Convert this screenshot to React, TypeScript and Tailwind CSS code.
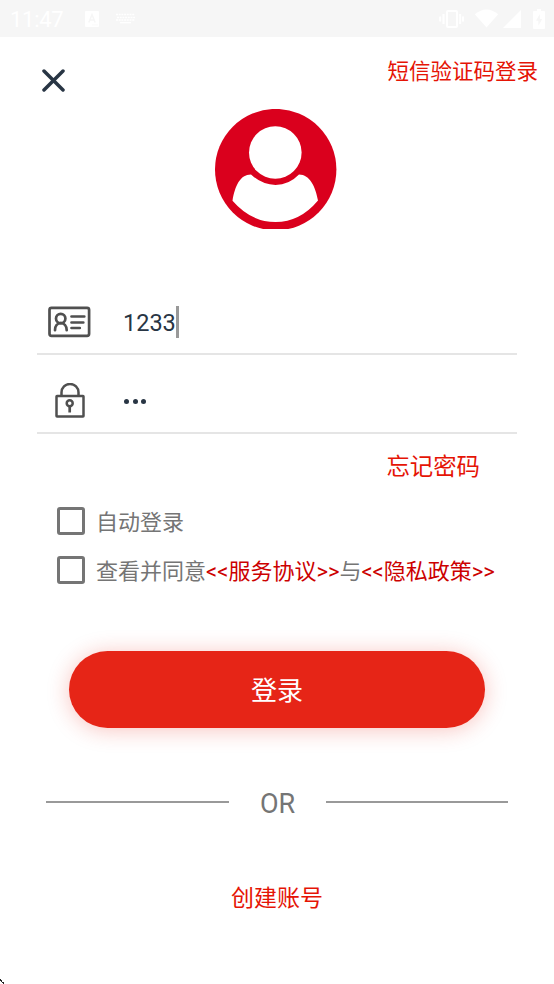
import React from "react";

function StatusBar() {
  return (
    <div className="flex h-[37px] items-center bg-[#f6f6f6] text-white">
      <span className="ml-[10px] mt-[2px] w-[74px] text-[22px] leading-none -tracking-[0.3px]">11:47</span>
      <svg className="ml-px" width="14" height="16" viewBox="0 0 14 16">
        <rect width="14" height="16" rx="1" fill="white" />
        <path d="M3.8 11.5 7 3.8l3.2 7.7M5 9h4" fill="none" stroke="#f6f6f6" strokeWidth="1.5" />
        <path d="M7 14h6" stroke="#f6f6f6" strokeWidth="0.6" />
      </svg>
      <svg className="ml-[17px]" width="19" height="11" viewBox="0 0 19 11" fill="none" stroke="white">
        <path d="M0 1.5h19M1 4.5h18M0 7h19" strokeWidth="1.6" strokeDasharray="2 0.7" />
        <path d="M4 9.7h11" strokeWidth="1.4" />
      </svg>
      <div className="ml-auto flex items-center">
        <svg width="25" height="20" viewBox="0 0 25 20" fill="none" stroke="white" strokeWidth="2">
          <rect x="8" y="2" width="10" height="16" rx="1" />
          <path d="M4.5 5v10M1.2 7.5v5M21.2 5v10M24 7.5v5" />
        </svg>
        <svg className="ml-[10px]" width="25" height="19" viewBox="0 0 25 19">
          <path d="M.8 5.2Q12.5-4.2 24.2 5.2L12.5 18.6Z" fill="white" />
        </svg>
        <svg className="ml-[4px]" width="18" height="18" viewBox="0 0 18 18">
          <path d="M0 18 18 0v18Z" fill="white" />
        </svg>
        <svg className="ml-[12px] mr-[9px]" width="12" height="20" viewBox="0 0 12 20">
          <path d="M4 0h4v2h3a1 1 0 0 1 1 1v16a1 1 0 0 1-1 1H1a1 1 0 0 1-1-1V3a1 1 0 0 1 1-1h3Z" fill="white" />
          <path d="M6.8 5 3 11.7h2.4v5.1L9.2 10H6.8Z" fill="#f6f6f6" />
        </svg>
      </div>
    </div>
  );
}

function Avatar() {
  return (
    <svg className="ml-[215px]" width="122" height="120" viewBox="0 0 122 120">
      <circle cx="60.7" cy="60.6" r="60.7" fill="#da001d" />
      <circle cx="60.3" cy="43.5" r="26.3" fill="white" />
      <path d="M17.5 91.700C20 77 25 65.500 36 65.500Q47 75.900 60.500 75.900T84 65.500C95 65.500 100.500 78 103 91.500Q85 113 60.500 113T17.500 91.700Z" fill="white" />
    </svg>
  );
}

function IdCardIcon() {
  return (
    <svg width="43" height="32" viewBox="0 0 43 32" fill="none" stroke="#505050" strokeWidth="2.700" strokeLinecap="round">
      <rect x="1.500" y="1.800" width="39.600" height="28" rx="2" />
      <circle cx="12.700" cy="12.500" r="4.700" />
      <path d="M7 24.200c0-4 2.200-7 5.700-7s6 3 6 7M23.500 10.500h12.800M23.500 16.500h11.800M23.500 22h8.300" />
    </svg>
  );
}

function LockIcon() {
  return (
    <svg width="30" height="35" viewBox="0 0 30 35" fill="none" stroke="#505050" strokeWidth="2.500">
      <rect x="1.500" y="13" width="27" height="20.500" rx="0.500" />
      <path d="M6.500 13V9.500a8.500 8.500 0 0 1 17 0V13" />
      <circle cx="14.700" cy="20.300" r="3" />
      <path d="M14.700 23.500v6" strokeWidth="2.700" />
    </svg>
  );
}

function Checkbox() {
  return <span className="box-border h-7 w-7 shrink-0 rounded-[3px] border-[3px] border-[#757575]" />;
}

export default function App() {
  return (
    <main className="relative flex h-[984px] w-[554px] flex-col overflow-hidden bg-white font-['Roboto','Noto_Sans_CJK_SC',sans-serif] text-[#757575]">
      <StatusBar />

      <header className="flex h-[72px] items-start justify-between pl-[42px] pr-[16px]">
        <svg className="mt-[32px]" width="23" height="23" viewBox="0 0 23 23" stroke="#283544" strokeWidth="3.500" strokeLinecap="round">
          <path d="M2 2l19 19M21 2 2 21" />
        </svg>
        <a className="mt-[19px] text-[21.500px] leading-8 text-[#e51405]">短信验证码登录</a>
      </header>

      <Avatar />

      <section className="mx-[37px] mt-[60px] text-[23.500px] text-[#283544]">
        <div className="flex h-[66px] items-center border-b-2 border-[#e5e5e5] pl-[11px] pt-[2px]">
          <IdCardIcon />
          <span className="ml-[32px] pt-px leading-8">1233</span>
          <span className="h-8 w-[3px] bg-[#999999]" />
        </div>
        <div className="flex h-[79px] items-center border-b-2 border-[#e5e5e5] pl-[18px] pt-[14px]">
          <LockIcon />
          <span className="ml-[39px] mt-[2px] flex gap-[3.500px]">
            <i className="h-[5px] w-[5px] rounded-full bg-[#283544]" />
            <i className="h-[5px] w-[5px] rounded-full bg-[#283544]" />
            <i className="h-[5px] w-[5px] rounded-full bg-[#283544]" />
          </span>
        </div>
      </section>

      <a className="mr-[74px] mt-[17px] self-end text-[23.400px] leading-8 text-[#e51405]">忘记密码</a>

      <section className="ml-[57px] mt-[24px] flex flex-col gap-[21px] whitespace-nowrap text-[22px] leading-7">
        <label className="flex h-7 items-center gap-[11px]">
          <Checkbox />
          <span className="pt-[3px]">自动登录</span>
        </label>
        <label className="flex h-7 items-center gap-[11px]">
          <Checkbox />
          <span className="pt-[4px]">
            查看并同意<span className="text-[#cc0000]">&lt;&lt;服务协议&gt;&gt;</span>与<span className="text-[#cc0000]">&lt;&lt;隐私政策&gt;&gt;</span>
          </span>
        </label>
      </section>

      <button className="ml-[69px] mt-[67px] h-[77px] w-[416px] rounded-full bg-[#e62517] pt-[3px] text-[26px] text-white shadow-[0_2px_22px_rgba(230,37,23,0.27)]">
        登录
      </button>

      <div className="ml-[46px] mr-[46px] mt-[58px] flex h-8 items-center">
        <span className="h-[2px] w-[183px] bg-[#999999]" />
        <span className="w-[97px] pt-[4px] text-center text-[27px] leading-8">OR</span>
        <span className="h-[2px] w-[182px] bg-[#999999]" />
      </div>

      <a className="mt-[65px] self-center text-[23px] leading-8 text-[#e51405]">创建账号</a>

      <svg className="absolute bottom-0 left-0" width="5" height="6" viewBox="0 0 5 6" shapeRendering="crispEdges">
        <path d="M0 1h1v1h1v2H1V3H0ZM2 4h1v1H2ZM3 4h1v2H3Z" fill="#222" />
      </svg>
    </main>
  );
}
